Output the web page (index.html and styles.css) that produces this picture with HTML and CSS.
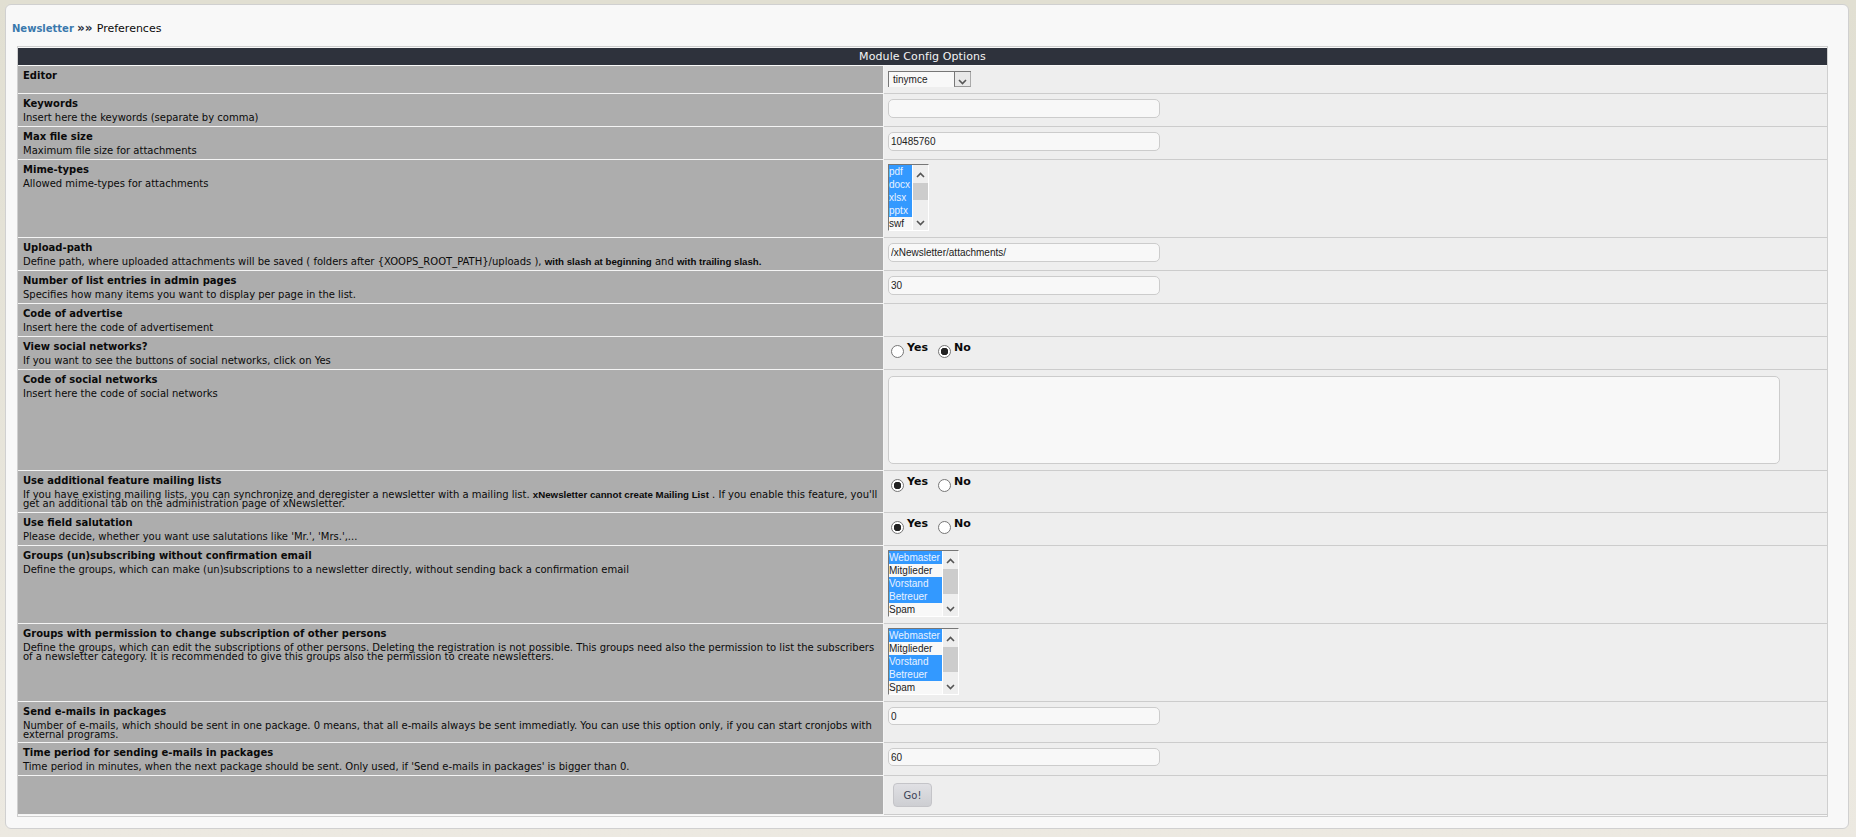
FILE: index.html
```html
<!DOCTYPE html>
<html lang="en">
<head>
<meta charset="utf-8">
<title>Preferences</title>
<link rel="stylesheet" href="styles.css">
</head>
<body>
<div class="panel">
  <div class="crumb"><a class="crumb-link">Newsletter</a> <span class="crumb-sep">»»</span> <span class="crumb-cur">Preferences</span></div>
  <table class="outer">
    <colgroup><col class="col-lab"><col></colgroup>
    <tr class="head"><th colspan="2">Module Config Options</th></tr>
    <tr class="h28"><td class="lab"><b>Editor</b></td><td class="val">
      <div class="select"><span>tinymce</span><span class="select-btn"><svg width="9" height="6" viewBox="0 0 9 6"><path d="M1 1l3.5 3.5L8 1" fill="none" stroke="#555" stroke-width="1.6"/></svg></span></div>
    </td></tr>
    <tr class="h33"><td class="lab"><b>Keywords</b><p>Insert here the keywords (separate by comma)</p></td><td class="val"><input class="text" type="text"></td></tr>
    <tr class="h33"><td class="lab"><b>Max file size</b><p>Maximum file size for attachments</p></td><td class="val"><input class="text" type="text" value="10485760"></td></tr>
    <tr class="h78"><td class="lab"><b>Mime-types</b><p>Allowed mime-types for attachments</p></td><td class="val">
      <div class="list list-mime">
        <div class="opts"><div class="sel">pdf</div><div class="sel">docx</div><div class="sel">xlsx</div><div class="sel">pptx</div><div>swf</div></div>
        <div class="bar"><svg width="9" height="6" viewBox="0 0 9 6"><path d="M1 5l3.5-3.5L8 5" fill="none" stroke="#555" stroke-width="1.6"/></svg><i class="thumb thumb-mime"></i><svg width="9" height="6" viewBox="0 0 9 6"><path d="M1 1l3.5 3.5L8 1" fill="none" stroke="#555" stroke-width="1.6"/></svg></div>
      </div>
    </td></tr>
    <tr class="h33"><td class="lab"><b>Upload-path</b><p>Define path, where uploaded attachments will be saved ( folders after {XOOPS_ROOT_PATH}/uploads ), <strong>with slash at beginning</strong> and <strong>with trailing slash.</strong></p></td><td class="val"><input class="text" type="text" value="/xNewsletter/attachments/"></td></tr>
    <tr class="h33"><td class="lab"><b>Number of list entries in admin pages</b><p>Specifies how many items you want to display per page in the list.</p></td><td class="val"><input class="text" type="text" value="30"></td></tr>
    <tr class="h33"><td class="lab"><b>Code of advertise</b><p>Insert here the code of advertisement</p></td><td class="val"></td></tr>
    <tr class="h33"><td class="lab"><b>View social networks?</b><p>If you want to see the buttons of social networks, click on Yes</p></td><td class="val val-radio">
      <label class="radio"><input type="radio" name="r1"><b>Yes</b></label><label class="radio"><input type="radio" name="r1" checked><b>No</b></label>
    </td></tr>
    <tr class="h101"><td class="lab"><b>Code of social networks</b><p>Insert here the code of social networks</p></td><td class="val"><textarea class="area"></textarea></td></tr>
    <tr class="h42"><td class="lab"><b>Use additional feature mailing lists</b><p>If you have existing mailing lists, you can synchronize and deregister a newsletter with a mailing list. <strong>xNewsletter cannot create Mailing List</strong> . If you enable this feature, you'll get an additional tab on the administration page of xNewsletter.</p></td><td class="val val-radio">
      <label class="radio"><input type="radio" name="r2" checked><b>Yes</b></label><label class="radio"><input type="radio" name="r2"><b>No</b></label>
    </td></tr>
    <tr class="h33"><td class="lab"><b>Use field salutation</b><p>Please decide, whether you want use salutations like 'Mr.', 'Mrs.',...</p></td><td class="val val-radio">
      <label class="radio"><input type="radio" name="r3" checked><b>Yes</b></label><label class="radio"><input type="radio" name="r3"><b>No</b></label>
    </td></tr>
    <tr class="h78"><td class="lab"><b>Groups (un)subscribing without confirmation email</b><p>Define the groups, which can make (un)subscriptions to a newsletter directly, without sending back a confirmation email</p></td><td class="val">
      <div class="list list-groups">
        <div class="opts"><div class="sel">Webmaster</div><div>Mitglieder</div><div class="sel">Vorstand</div><div class="sel">Betreuer</div><div>Spam</div></div>
        <div class="bar"><svg width="9" height="6" viewBox="0 0 9 6"><path d="M1 5l3.5-3.5L8 5" fill="none" stroke="#555" stroke-width="1.6"/></svg><i class="thumb thumb-groups"></i><svg width="9" height="6" viewBox="0 0 9 6"><path d="M1 1l3.5 3.5L8 1" fill="none" stroke="#555" stroke-width="1.6"/></svg></div>
      </div>
    </td></tr>
    <tr class="h78"><td class="lab"><b>Groups with permission to change subscription of other persons</b><p>Define the groups, which can edit the subscriptions of other persons. Deleting the registration is not possible. This groups need also the permission to list the subscribers of a newsletter category. It is recommended to give this groups also the permission to create newsletters.</p></td><td class="val">
      <div class="list list-groups">
        <div class="opts"><div class="sel">Webmaster</div><div>Mitglieder</div><div class="sel">Vorstand</div><div class="sel">Betreuer</div><div>Spam</div></div>
        <div class="bar"><svg width="9" height="6" viewBox="0 0 9 6"><path d="M1 5l3.5-3.5L8 5" fill="none" stroke="#555" stroke-width="1.6"/></svg><i class="thumb thumb-groups"></i><svg width="9" height="6" viewBox="0 0 9 6"><path d="M1 1l3.5 3.5L8 1" fill="none" stroke="#555" stroke-width="1.6"/></svg></div>
      </div>
    </td></tr>
    <tr class="h41"><td class="lab"><b>Send e-mails in packages</b><p>Number of e-mails, which should be sent in one package. 0 means, that all e-mails always be sent immediatly. You can use this option only, if you can start cronjobs with external programs.</p></td><td class="val"><input class="text text-sm" type="text" value="0"></td></tr>
    <tr class="h33"><td class="lab"><b>Time period for sending e-mails in packages</b><p>Time period in minutes, when the next package should be sent. Only used, if 'Send e-mails in packages' is bigger than 0.</p></td><td class="val"><input class="text text-sm" type="text" value="60"></td></tr>
    <tr class="h39"><td class="lab"></td><td class="val val-go"><button class="go" type="button">Go!</button></td></tr>
  </table>
</div>
</body>
</html>
```
FILE: styles.css
```css
* { box-sizing: border-box; }
html, body { margin: 0; height: 100%; }
body {
  padding: 4px 7px 8px 5px;
  background: linear-gradient(#e1dfd2, #ece9e1);
  font-family: "DejaVu Sans", sans-serif;
  font-size: 10px;
  color: #0a0a0a;
  overflow: hidden;
}
.panel {
  height: 825px;
  padding: 17px 22px 0 6px;
  background: #f8f8f8;
  border: 1px solid #d0d0d0;
  border-radius: 6px;
}
.crumb { height: 24px; font-size: 10px; line-height: 12px; }
.crumb-link { color: #3a78ad; font-weight: bold; }
.crumb-sep { color: #2a3040; font-weight: bold; font-size: 12px; line-height: 12px; margin-right: 1px; }
.crumb-cur { font-size: 11px; }
.outer {
  width: 1811px;
  margin-left: 5px;
  table-layout: fixed;
  border-collapse: separate;
  border-spacing: 0;
  border: 1px solid #cfcfcf;
  padding: 1px 0;
  background: #f8f8f8;
}
.col-lab { width: 866px; }
.head th {
  height: 18px;
  padding: 1px 0 0;
  background: #2e323c;
  color: #f4f4f4;
  font-weight: normal;
  font-size: 11px;
  line-height: 16px;
  letter-spacing: 0.1px;
  border-bottom: 1px solid #f8f8f8;
}
td { padding: 0; vertical-align: top; }
.lab {
  padding: 3px 5px 0 5px;
  background: #adadad;
  border-right: 1px solid #f4f4f4;
  border-bottom: 1px solid #f4f4f4;
}
.lab b { display: block; font-size: 10px; line-height: 14px; }
.lab p { margin: 0; font-size: 10px; line-height: 9px; padding-top: 2px; }
.lab strong { font-family: "Liberation Sans", sans-serif; font-size: 9.7px; }
.val {
  padding: 5px 0 0 4px;
  background: #eee;
  border-bottom: 1px solid #ccc;
}
.h28 td { height: 28px; }
.h33 td { height: 33px; }
.h41 td { height: 41px; }
.h42 td { height: 42px; }
.h78 td { height: 78px; }
.h39 td { height: 39px; }
.h101 td { height: 101px; }
.text {
  display: block;
  width: 272px;
  height: 19px;
  margin: 0;
  padding: 0 2px;
  background: #f8f8f8;
  border: 1px solid #ccc;
  border-radius: 5px;
  font: 10px "Liberation Sans", sans-serif;
  color: #222;
  outline: none;
}
.text-sm { height: 18px; }
.area {
  display: block;
  width: 892px;
  height: 88px;
  margin: 1px 0 0;
  background: #f8f8f8;
  border: 1px solid #ccc;
  border-radius: 5px;
  resize: none;
  outline: none;
}
.select {
  display: flex;
  justify-content: space-between;
  width: 83px;
  height: 16px;
  background: #f8f8f8;
  border-top: 1px solid #777;
  border-left: 1px solid #777;
  font: 10px/15px "Liberation Sans", sans-serif;
  color: #222;
}
.select > span:first-child { padding-left: 4px; }
.select-btn {
  display: flex;
  align-items: flex-end;
  justify-content: center;
  width: 17px;
  height: 15px;
  padding-bottom: 1px;
  background: #e8e8e8;
  border-left: 1px solid #777;
  border-bottom: 1px solid #999;
  border-right: 1px solid #aaa;
}
.list {
  display: flex;
  height: 67px;
  margin-top: -1px;
  background: #f8f8f8;
  border-top: 1px solid #777;
  border-left: 1px solid #777;
  border-right: 1px solid #fff;
  border-bottom: 1px solid #fff;
  font: 10px/13px "Liberation Sans", sans-serif;
  color: #222;
}
.list-mime { width: 41px; }
.list-groups { width: 71px; }
.opts { flex: 1; min-width: 0; overflow: hidden; white-space: nowrap; }
.opts div { height: 13px; }
.opts .sel { background: #3399ff; color: #e8f2ff; }
.bar {
  display: flex;
  flex-direction: column;
  align-items: center;
  width: 16px;
  padding-top: 7px;
  background: #eee;
  border-left: 1px solid #fff;
}
.thumb { display: block; width: 15px; background: #ccc; }
.thumb-mime { height: 17px; margin: 5px 0 20px; }
.thumb-groups { height: 25px; margin: 5px 0 12px; }
.val-radio { padding: 0 0 0 7px; }
.radio { display: inline-flex; align-items: flex-start; margin-right: 10px; padding-top: 4px; }
.radio b { font-size: 11px; line-height: 14px; margin-left: 3px; }
.radio input {
  appearance: none;
  width: 13px;
  height: 13px;
  margin: 4px 0 0;
  background: #fff;
  border: 1px solid #767676;
  border-radius: 50%;
}
.radio input:checked { background: radial-gradient(circle, #222 0 3.5px, #fff 4px); }
.val-go { padding: 7px 0 0 9px; }
.go {
  display: block;
  width: 39px;
  height: 24px;
  padding: 0;
  background: linear-gradient(#e0e0e4, #cdced2);
  border: 1px solid #c4c4c8;
  border-radius: 4px;
  font: 10px "DejaVu Sans", sans-serif;
  color: #3b4256;
}
```
